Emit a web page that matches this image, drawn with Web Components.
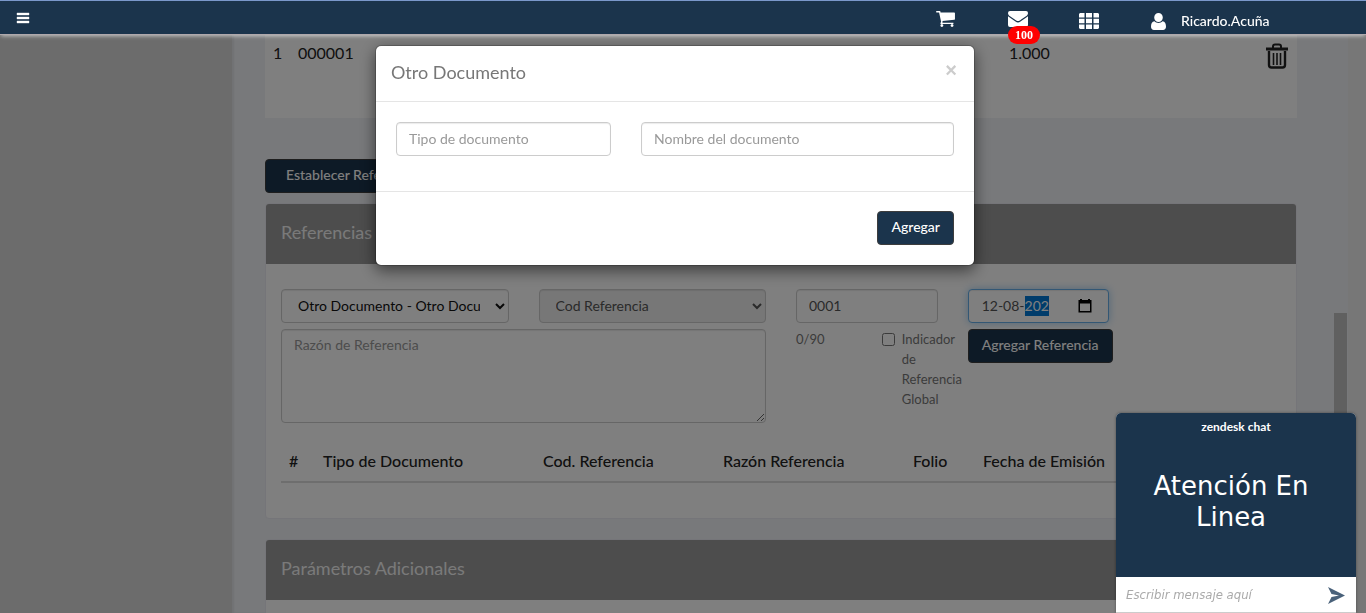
<!DOCTYPE html>
<html lang="es">
<head>
<meta charset="utf-8">
<meta name="viewport" content="width=device-width, initial-scale=1">
<title>Otro Documento</title>
<style>
  html, body { margin: 0; height: 100%; }
  body {
    --navy: #1b344c;
    --line: #ccc;
    font: 14px/20px Lato, "Liberation Sans", sans-serif;
    color: #777;
    background: #eee;
    overflow: hidden;
  }
</style>
</head>
<body>
<app-shell>
  <app-header slot="header" user="Ricardo.Acuña" count="100"></app-header>
  <item-row number="1" code="000001" amount="1.000"></item-row>
  <nav-button>Establecer Referencias</nav-button>
  <panel-card heading="Referencias"><reference-form></reference-form></panel-card>
  <panel-card heading="Parámetros Adicionales"></panel-card>
</app-shell>
<document-modal></document-modal>
<chat-widget></chat-widget>

<script>
const controls = `
  *, *::before, *::after { box-sizing: border-box; }
  button { font: inherit; cursor: pointer; }
  .btn {
    height: 34px; padding: 0 13px 2px; border: 1px solid #3d3d3d; border-radius: 4px;
    background: var(--navy); color: #fff; font-weight: 500; white-space: nowrap;
  }
  .field {
    display: block; width: 100%; height: 34px; margin: 0; padding: 5px 12px 7px;
    border: 1px solid var(--line); border-radius: 4px; background: #fff; color: #555;
    font: inherit; box-shadow: inset 0 1px 1px rgba(0,0,0,.08); outline: 0;
  }
  .field::placeholder { color: #999; opacity: 1; }
`;

function define(name, markup, setup) {
  customElements.define(name, class extends HTMLElement {
    constructor() {
      super();
      this.attachShadow({ mode: "open" });
    }
    connectedCallback() {
      const template = document.createElement("template");
      template.innerHTML = typeof markup === "function" ? markup(this) : markup;
      this.shadowRoot.replaceChildren(template.content.cloneNode(true));
      if (setup) setup(this.shadowRoot);
    }
  });
}

define("app-shell", `
  <style>
    *, *::before { box-sizing: border-box; }
    :host { display: flex; flex-direction: column; height: 100vh; overflow: hidden; }
    .body { flex: 1; min-height: 0; display: flex; padding-right: 18px; }
    aside { flex: 0 0 232px; background: #d8d8d8; }
    main {
      flex: 1; min-width: 0; overflow: hidden; padding: 0 37px 0 33px;
      background: #f0f2f6; box-shadow: inset 2px 0 2px rgba(0,0,0,.06);
    }
    .track { flex: 0 0 14px; background: #f0f2f6; padding: 278px 1px 0 0; }
    .thumb { height: 180px; background: #c1c1c1; }
  </style>
  <slot name="header"></slot>
  <div class="body">
    <aside></aside>
    <main><slot></slot></main>
    <div class="track"><div class="thumb"></div></div>
  </div>
`);

define("app-header", el => `
  <style>
    *, *::before { box-sizing: border-box; }
    :host {
      box-sizing: border-box; display: flex; align-items: center; flex: 0 0 35px; padding: 0 95px 0 16px;
      position: relative; z-index: 20; background: var(--navy); color: #fff;
      border-top: 1px solid #7b98cb; border-bottom: 1px solid #afa8ac;
      box-shadow: 0 2px 4px -1px rgba(255,255,255,.6);
    }
    button { display: flex; padding: 0; border: 0; background: none; color: inherit; cursor: pointer; }
    svg { display: block; fill: currentColor; }
    nav { display: flex; align-items: center; margin-left: auto; padding-top: 6px; }
    .cart { margin: 0 53px 4px 0; }
    .mail { position: relative; margin: 0 51px 4px 0; }
    .apps { margin-right: 52px; }
    .user { margin: 2px 15px 0 0; }
    .badge {
      position: absolute; left: 0; top: 15px; width: 32px; height: 18px; border-radius: 9px;
      background: #f00; font: bold 12px/18px "Liberation Serif", serif; text-align: center;
    }
    a { min-width: 90px; color: inherit; text-decoration: none; font-weight: 500; }
  </style>
  <button aria-label="Menú"><svg width="14" height="12" viewBox="0 0 14 12"><path d="M1 1h12v2H1zM1 5h12v2H1zM1 9h12v2H1z" stroke="currentColor" stroke-width=".4"/></svg></button>
  <nav>
    <button class="cart" aria-label="Carrito"><svg width="19" height="16" viewBox="0 256 1664 1408"><path d="M640 1536q0 52-38 90t-90 38-90-38-38-90 38-90 90-38 90 38 38 90zm896 0q0 52-38 90t-90 38-90-38-38-90 38-90 90-38 90 38 38 90zm128-1088v512q0 24-16.500 42.500t-40.500 21.500l-1044 122q13 60 13 70 0 16-24 64h920q26 0 45 19t19 45-19 45-45 19h-1024q-26 0-45-19t-19-45q0-11 8-31.500t16-36 21.500-40 15.500-29.500l-177-823h-204q-26 0-45-19t-19-45 19-45 45-19h256q16 0 28.500 6.500t19.500 15.500 13 24.500 8 26 5.500 29.500 4.500 26h1201q26 0 45 19t19 45z"/></svg></button>
    <button class="mail" aria-label="Mensajes"><svg width="20" height="16" viewBox="0 0 20 16"><path d="M2 0h16a2 2 0 0 1 2 2c0 1.600-1 2.600-2 3.300l-6.200 4.200c-1.200.8-2.400.8-3.600 0L2 5.300C1 4.600 0 3.600 0 2a2 2 0 0 1 2-2zM0 5.300c3 2.300 5 3.500 7.500 5.300 1.700 1.200 3.300 1.200 5 0C15 8.800 17 7.600 20 5.300V14a2 2 0 0 1-2 2H2a2 2 0 0 1-2-2z"/></svg><span class="badge">${el.getAttribute("count")}</span></button>
    <button class="apps" aria-label="Aplicaciones"><svg width="20" height="16" viewBox="0 0 20 16"><path d="M1 0h4.500v4.500H0V1zM7 0h6v4.500H7zM14.500 0H19l1 1v3.500h-5.500zM0 5.800h5.500v4.400H0zM7 5.800h6v4.400H7zM14.500 5.800H20v4.400h-5.500zM0 11.500h5.500V16H1l-1-1zM7 11.500h6V16H7zM14.500 11.500H20V15l-1 1h-4.500z"/></svg></button>
    <svg class="user" width="15" height="17" viewBox="0 0 15 17"><path d="M7.500 0a4.300 4.500 0 0 1 0 9 4.300 4.500 0 0 1 0-9zM3.500 8.200c1 1.100 2.400 1.700 4 1.700s3-.6 4-1.700c2.600.3 3.500 2.800 3.500 5.600 0 2-1.200 3.200-3 3.200H3c-1.800 0-3-1.200-3-3.200 0-2.800.9-5.300 3.500-5.600z"/></svg>
    <a href="#cuenta">${el.getAttribute("user")}</a>
  </nav>
`);

define("item-row", el => `
  <style>
    :host { display: block; background: #fff; padding-bottom: 38px; margin-bottom: 41px; }
    table { width: 100%; border-collapse: collapse; table-layout: fixed; font-size: 16px; line-height: 20px; color: #222; }
    td { padding: 8px 8px 0; height: 37px; box-sizing: border-box; vertical-align: top; }
    td:nth-child(n+2) { padding-left: 9px; }
    td:nth-child(1) { width: 24px; }
    td:nth-child(3) { width: 258px; }
    td:nth-child(4) { width: 39px; }
    td:nth-child(4) { padding: 8px 9px 0 8px; }
    button { display: block; padding: 0; border: 0; background: none; color: #222; }
    tr { height: 45px; }
  </style>
  <table><tbody><tr>
    <td>${el.getAttribute("number")}</td>
    <td>${el.getAttribute("code")}</td>
    <td>${el.getAttribute("amount")}</td>
    <td><button aria-label="Eliminar"><svg width="22" height="26" viewBox="0 0 22 26" fill="none" stroke="currentColor"><path d="M0 6h22" stroke-width="3"/><path d="M7 5V3.500q0-2 2-2h4q2 0 2 2V5" stroke-width="2"/><path d="M3 8v14Q3 24.500 5.500 24.500h11q2.500 0 2.500-2.500V8" stroke-width="2.400"/><path d="M7.500 10v12M11 10v12M14.500 10v12" stroke-width="1.600"/></svg></button></td>
  </tr></tbody></table>
`);

define("nav-button", `
  <style>${controls}
    :host { display: block; margin-bottom: 10px; }
    .btn { padding: 0 20px 2px; }
  </style>
  <button class="btn"><slot></slot></button>
`);

define("panel-card", el => `
  <style>
    :host {
      display: block; margin-bottom: 20px; border: 1px solid #eaeaf2; border-radius: 4px;
      background: #fff; overflow: hidden;
    }
    h3 {
      margin: 0; padding: 18px 15px 22px; background: #9a9a9a; color: #f4f4f4;
      font-size: 18px; line-height: 20px; font-weight: 400;
    }
    .content { padding: 25px 15px 35px; }
  </style>
  <h3>${el.getAttribute("heading")}</h3>
  <div class="content"><slot></slot></div>
`);

define("reference-form", `
  <style>${controls}
    :host { display: block; }
    form { display: grid; grid-template-columns: repeat(12, minmax(0, 1fr)); gap: 6px 30px; align-items: start; }
    .s2 { grid-column: span 2; }
    .s3 { grid-column: span 3; }
    .reason { grid-column: 1 / span 6; }
    select.field { color: #111; }
    select.field:disabled { background: #eee; color: #555; opacity: 1; }
    textarea.field { height: 94px; resize: both; }
    .date { display: flex; align-items: center; padding: 0 16px 0 13px; border-color: #66afe9;
      box-shadow: inset 0 1px 1px rgba(0,0,0,.08), 0 0 8px rgba(102,175,233,.6); }
    .date input { flex: 1; min-width: 0; padding: 0; border: 0; outline: 0; background: none; color: #555; font: inherit; }
    .date input::selection { background: #0078d7; color: #fff; }
    .date button { padding: 0; border: 0; background: none; color: #000; }
    .date svg { display: block; }
    .check { display: flex; gap: 7px; }
    .check input { flex: none; width: 13px; height: 13px; margin: 4px 0 0; }
    .hint, .check { color: #777; font-size: 13px; }
    .action { grid-column: 9 / -1; }
    table { width: 100%; margin-top: 28px; border-collapse: collapse; table-layout: fixed; }
    th { padding: 0 8px 10px; border-bottom: 2px solid #ddd; color: #222;
      font-size: 16px; line-height: 20px; font-weight: 500; text-align: left; white-space: nowrap; }
  </style>
  <form>
    <select class="field s3" aria-label="Tipo de documento"><option>Otro Documento - Otro Documento</option></select>
    <select class="field s3" aria-label="Cod Referencia" disabled><option>Cod Referencia</option></select>
    <input class="field s2" aria-label="Folio" value="0001">
    <div class="field date s2">
      <input id="fecha" aria-label="Fecha de emisión" inputmode="numeric" value="12-08-202">
      <button type="button" aria-label="Abrir calendario"><svg width="14" height="14" viewBox="0 0 14 14" fill="currentColor"><path d="M2 0h2v1h6V0h2v1h1.500v12.500H.5V1H2zm0 4.500V12h10V4.500z" fill-rule="evenodd"/></svg></button>
    </div>
    <textarea class="field reason" aria-label="Razón de Referencia" placeholder="Razón de Referencia"></textarea>
    <span class="hint">0/90</span>
    <label class="check"><input type="checkbox"><span>Indicador de Referencia Global</span></label>
    <div class="action"><button type="button" class="btn">Agregar Referencia</button></div>
  </form>
  <table>
    <colgroup><col style="width:34px"><col style="width:22%"><col style="width:18%"><col style="width:19%"><col style="width:7%"><col></colgroup>
    <thead><tr><th>#</th><th>Tipo de Documento</th><th>Cod. Referencia</th><th>Razón Referencia</th><th>Folio</th><th>Fecha de Emisión</th></tr></thead>
  </table>
`, root => {
  const date = root.getElementById("fecha");
  date.focus({ preventScroll: true });
  date.setSelectionRange(6, 9);
});

define("document-modal", `
  <style>${controls}
    :host { display: block; position: fixed; inset: 0; z-index: 10; padding: 45px 16px 0 0; background: rgba(0,0,0,.5); }
    section {
      max-width: 600px; margin: 0 auto; border: 1px solid rgba(0,0,0,.2); border-radius: 6px;
      background: #fff; background-clip: padding-box; box-shadow: 0 5px 15px rgba(0,0,0,.5);
    }
    header { display: flex; justify-content: space-between; padding: 15px 15px 18px; border-bottom: 1px solid #e5e5e5; }
    h4 { margin: 0; font-size: 18px; line-height: 22px; font-weight: 400; }
    .close { height: 18px; padding: 0 2px; border: 0; background: none; color: #ccc; font: bold 20px/16px "Liberation Sans", sans-serif; }
    form { display: grid; grid-template-columns: repeat(12, minmax(0, 1fr)); gap: 30px; padding: 20px 20px 35px; }
    .s5 { grid-column: span 5; }
    .s7 { grid-column: span 7; }
    footer { display: flex; justify-content: flex-end; padding: 19px 20px 20px; border-top: 1px solid #e5e5e5; }
  </style>
  <section role="dialog" aria-labelledby="titulo">
    <header><h4 id="titulo">Otro Documento</h4><button class="close" aria-label="Cerrar">×</button></header>
    <form>
      <input class="field s5" aria-label="Tipo de documento" placeholder="Tipo de documento">
      <input class="field s7" aria-label="Nombre del documento" placeholder="Nombre del documento">
    </form>
    <footer><button class="btn">Agregar</button></footer>
  </section>
`);

define("chat-widget", `
  <style>
    *, *::before { box-sizing: border-box; }
    :host {
      display: block; position: fixed; right: 10px; bottom: 0; z-index: 30; width: 240px;
      border-radius: 5px 5px 0 0; overflow: hidden; background: #fff; box-shadow: 0 0 3px rgba(0,0,0,.4);
    }
    .top { height: 164px; padding-top: 4px; background: var(--navy); color: #fff; text-align: center; }
    .brand { font: bold 12px/20px Lato, sans-serif; }
    h2 { margin: 0; padding: 34px 20px 0 10px; font: 400 26px/31px "DejaVu Sans", sans-serif; }
    form { display: flex; align-items: center; height: 36px; padding: 1px 11px 0 10px; border-bottom: 1px solid #ccc; }
    input { flex: 1; min-width: 0; padding: 0; border: 0; outline: 0; font: italic 13px/20px "DejaVu Sans Condensed", "DejaVu Sans", sans-serif; }
    input::placeholder { color: #aaa; opacity: 1; }
    button { padding: 0; border: 0; background: none; }
    svg { display: block; }
  </style>
  <div class="top">
    <div class="brand">zendesk chat</div>
    <h2>Atención En Linea</h2>
  </div>
  <form>
    <input aria-label="Mensaje" placeholder="Escribir mensaje aquí">
    <button type="button" aria-label="Enviar"><svg width="17" height="17" viewBox="0 0 17 17"><path d="M0 0l17 8.500L0 17l3.500-7L11 8.500 3.500 7z" fill="#49617a"/></svg></button>
  </form>
`);
</script>
</body>
</html>
